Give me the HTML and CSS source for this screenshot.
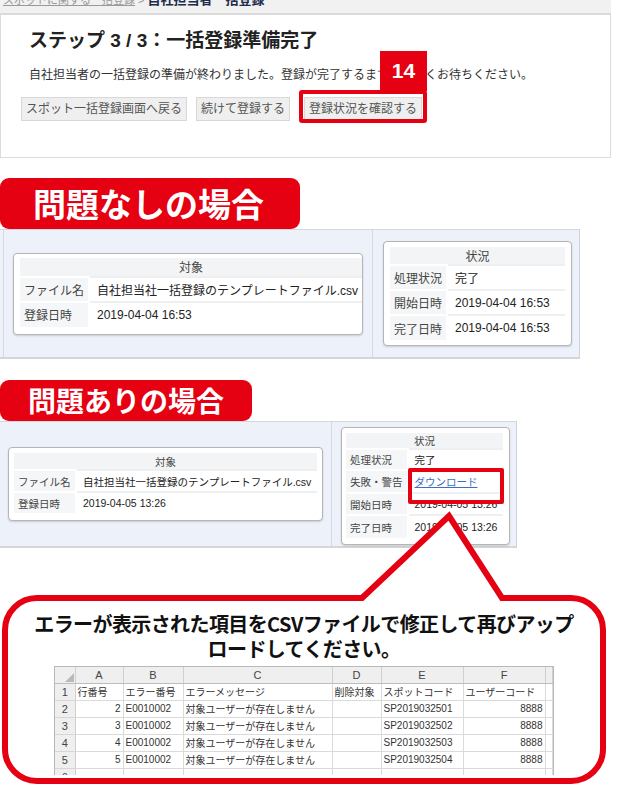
FILE: index.html
```html
<!DOCTYPE html>
<html lang="ja">
<head>
    <meta charset="utf-8">
    <title>自社担当者一括登録</title>
    <link rel="stylesheet" href="styles.css">
</head>
<body>
    <div class="crumbs">
        <div class="crumbs-line"><a href="#">スポットに関する一括登録</a> &gt; <b>自社担当者一括登録</b></div>
    </div>

    <div class="panel">
        <h1>ステップ 3 / 3：一括登録準備完了</h1>
        <p class="lead">自社担当者の一括登録の準備が終わりました。登録が完了するまでしばらくお待ちください。</p>
        <div class="buttons">
            <button type="button">スポット一括登録画面へ戻る</button>
            <button type="button" class="btn-next">続けて登録する</button>
            <span class="marked">
                <button type="button">登録状況を確認する</button>
                <span class="step-num">14</span>
            </span>
        </div>
    </div>

    <!-- 問題なし -->
    <div class="case">
        <div class="tab">問題なしの場合</div>
        <div class="result">
            <div class="cell cell-left">
                <div class="card">
                    <table>
                        <tr><th colspan="2">対象</th></tr>
                        <tr><td class="k">ファイル名</td><td class="v">自社担当社一括登録のテンプレートファイル.csv</td></tr>
                        <tr><td class="k">登録日時</td><td class="v">2019-04-04 16:53</td></tr>
                    </table>
                </div>
            </div>
            <div class="cell cell-right">
                <div class="card">
                    <table>
                        <tr><th colspan="2">状況</th></tr>
                        <tr><td class="k">処理状況</td><td class="v">完了</td></tr>
                        <tr><td class="k">開始日時</td><td class="v">2019-04-04 16:53</td></tr>
                        <tr><td class="k">完了日時</td><td class="v">2019-04-04 16:53</td></tr>
                    </table>
                </div>
            </div>
        </div>
    </div>

    <!-- 問題あり -->
    <div class="case case-small">
        <div class="tab">問題ありの場合</div>
        <div class="result">
            <div class="cell cell-left">
                <div class="card">
                    <table>
                        <tr><th colspan="2">対象</th></tr>
                        <tr class="r1"><td class="k">ファイル名</td><td class="v">自社担当社一括登録のテンプレートファイル.csv</td></tr>
                        <tr class="r2"><td class="k">登録日時</td><td class="v">2019-04-05 13:26</td></tr>
                    </table>
                </div>
            </div>
            <div class="cell cell-right">
                <div class="card">
                    <table>
                        <tr><th colspan="2">状況</th></tr>
                        <tr class="r1"><td class="k">処理状況</td><td class="v">完了</td></tr>
                        <tr class="r2"><td class="k">失敗・警告</td><td class="v marked-cell"><a href="#">ダウンロード</a></td></tr>
                        <tr class="r3"><td class="k">開始日時</td><td class="v">2019-04-05 13:26</td></tr>
                        <tr class="r4"><td class="k">完了日時</td><td class="v">2019-04-05 13:26</td></tr>
                    </table>
                </div>
            </div>
        </div>
    </div>

    <div class="callout">
        <svg class="callout-shape" viewBox="0 502 618 290" width="618" height="290">
            <path d="M362 598 L449 516 L502 598 H571 A32 32 0 0 1 603 630 V749 A32 32 0 0 1 571 781 H37 A32 32 0 0 1 5 749 V630 A32 32 0 0 1 37 598 Z"
                  fill="#fff" stroke="#e50012" stroke-width="6" stroke-linejoin="miter" stroke-miterlimit="10"/>
        </svg>
        <p class="callout-text">エラーが表示された項目をCSVファイルで修正して再びアップ<br>ロードしてください。</p>
        <div class="sheet">
            <table>
                <colgroup>
                    <col class="c-n"><col class="c-a"><col class="c-b"><col class="c-c">
                    <col class="c-d"><col class="c-e"><col class="c-f"><col>
                </colgroup>
                <tr class="hdr">
                    <th class="corner"><svg width="9" height="9" viewBox="0 0 9 9"><polygon points="9,0 9,9 0,9" fill="#b9b9b9"/></svg></th>
                    <th>A</th><th>B</th><th>C</th><th>D</th><th>E</th><th>F</th><th></th>
                </tr>
                <tr><th>1</th><td>行番号</td><td>エラー番号</td><td>エラーメッセージ</td><td>削除対象</td><td>スポットコード</td><td>ユーザーコード</td><td></td></tr>
                <tr><th>2</th><td class="num">2</td><td>E0010002</td><td>対象ユーザーが存在しません</td><td></td><td>SP2019032501</td><td class="num">8888</td><td></td></tr>
                <tr><th>3</th><td class="num">3</td><td>E0010002</td><td>対象ユーザーが存在しません</td><td></td><td>SP2019032502</td><td class="num">8888</td><td></td></tr>
                <tr><th>4</th><td class="num">4</td><td>E0010002</td><td>対象ユーザーが存在しません</td><td></td><td>SP2019032503</td><td class="num">8888</td><td></td></tr>
                <tr><th>5</th><td class="num">5</td><td>E0010002</td><td>対象ユーザーが存在しません</td><td></td><td>SP2019032504</td><td class="num">8888</td><td></td></tr>
                <tr><th>6</th><td></td><td></td><td></td><td></td><td></td><td></td><td></td></tr>
            </table>
        </div>
    </div>
</body>
</html>
```

FILE: styles.css
```css
* {
    box-sizing: border-box;
}

body {
    margin: 0;
    width: 618px;
    height: 794px;
    overflow: hidden;
    background-color: #fff;
    font-family: "Liberation Sans", "Noto Sans CJK JP", sans-serif;
    color: #333;
}

/* breadcrumb bar, cut off at the top */
.crumbs {
    width: 611px;
    height: 15px;
    background-color: #f1f1f1;
    border-bottom: 2px solid #dadada;
    overflow: hidden;
}

.crumbs-line {
    margin-top: -8px;
    padding-left: 3px;
    font-size: 11px;
    line-height: 16px;
    white-space: nowrap;
    color: #999;
}

.crumbs a {
    color: #999;
}

.crumbs b {
    color: #1d2c4c;
    font-size: 13px;
}

/* step panel */
.panel {
    width: 611px;
    height: 143px;
    border: 1px solid #dcdcdc;
    border-top: 0;
    padding: 14px 20px 0 28px;
}

h1 {
    margin: 0;
    height: 26px;
    font-size: 19px;
    line-height: 24px;
    font-weight: bold;
    color: #222;
}

.lead {
    margin: 11px 0 0;
    height: 18px;
    font-size: 12px;
    line-height: 18px;
    color: #333;
    white-space: nowrap;
}

.buttons {
    display: flex;
    align-items: center;
    margin: 13px 0 0 -8px;
}

.buttons button {
    height: 24px;
    margin: 0 9px 0 0;
    padding: 3px 4px;
    font-family: "Liberation Sans", "Noto Sans CJK JP", sans-serif;
    font-size: 12px;
    line-height: 16px;
    color: #555;
    background-color: #efefef;
    border: 1px solid #d8d8d8;
    border-radius: 0;
    white-space: nowrap;
}

.buttons .btn-next {
    margin-right: 14px;
}

.marked {
    position: relative;
    display: inline-block;
}

.marked button {
    margin: 0;
}

.marked::after {
    content: "";
    position: absolute;
    top: -7px;
    right: -5px;
    bottom: -2px;
    left: -5px;
    border: 4px solid #e50012;
    border-radius: 3px;
}

.step-num {
    position: absolute;
    top: -46px;
    right: -5px;
    width: 47px;
    height: 40px;
    background-color: #e50012;
    color: #fff;
    font-size: 21px;
    font-weight: bold;
    line-height: 40px;
    text-align: center;
}

/* case sections */
.case {
    margin-top: 20px;
}

.tab {
    position: relative;
    z-index: 1;
    width: 300px;
    height: 51px;
    padding-left: 33px;
    background-color: #e50012;
    color: #fff;
    border-radius: 9px;
    font-family: "Noto Sans CJK JP", sans-serif;
    font-size: 33px;
    font-weight: bold;
    line-height: 51px;
    white-space: nowrap;
}

.result {
    display: grid;
    grid-template-columns: 370px 1fr;
    width: 580px;
    height: 130px;
    padding-left: 3px;
    background-color: #edf1fa;
    border-top: 1px solid #d4d8de;
    border-right: 1px solid #cfd3d9;
    border-bottom: 2px solid #d6d6d6;
}

.cell {
    display: flex;
    align-items: center;
}

.cell-left {
    padding: 0 9px;
    border-left: 1px solid #d6dae0;
    border-right: 1px solid #d6dae0;
}

.cell-right {
    padding: 0 7px 0 10px;
}

.card {
    width: 100%;
    background-color: #fff;
    border: 1px solid #b5b5b5;
    border-radius: 4px;
    box-shadow: 0 1px 2px rgba(0, 0, 0, 0.15);
    padding: 4px 6px 7px;
}

.cell-right .card {
    padding: 5px 6px 5px 6px;
}

.card table {
    width: 100%;
    border-collapse: collapse;
    font-size: 12px;
}

.card th {
    height: 19px;
    padding: 0;
    background-color: #f3f4f5;
    font-weight: normal;
    color: #444;
    text-align: center;
}

.cell-right .card th {
    height: 18px;
}

.card td {
    height: 25px;
    padding: 0 4px;
    border-top: 2px solid #eeeff0;
    white-space: nowrap;
}

.card td.k {
    width: 68px;
    background-color: #f5f6f7;
    border-top-color: #fff;
    border-right: 2px solid #fff;
    color: #444;
}

.cell-right .card td.k {
    width: 57px;
}

.card td.v {
    padding-left: 7px;
    color: #222;
}

/* smaller second case */
.case-small {
    margin-top: 21px;
}

.case-small .tab {
    width: 252px;
    height: 41px;
    padding-left: 28px;
    font-size: 28px;
    line-height: 41px;
}

.case-small .result {
    grid-template-columns: 332px 1fr;
    width: 517px;
    height: 127px;
    padding-left: 0;
}

.case-small .cell-left {
    padding: 0 8px;
    border-left: 0;
}

.case-small .cell-right {
    align-items: flex-start;
    padding: 5px 6px 0 9px;
}

.case-small .card {
    padding: 5px 5px 7px;
}

.case-small .cell-right .card {
    padding: 5px 6px 6px 4px;
}

.case-small .card table {
    font-size: 10.5px;
}

.case-small .card th {
    height: 17px;
}

.case-small .cell-right .card th {
    height: 16px;
}

.case-small .card td {
    height: 22px;
    padding: 0 4px;
}

.case-small .card .r2 td {
    height: 21px;
}

.case-small .cell-right .card .r1 td {
    height: 21px;
}

.case-small .cell-right .card .r2 td,
.case-small .cell-right .card .r4 td {
    height: 23px;
}

.case-small .card td.k {
    width: 62px;
}

.case-small .cell-right .card td.k {
    width: 61px;
}

.case-small .card td.v {
    padding-left: 6px;
}

.marked-cell {
    position: relative;
}

.marked-cell a {
    color: #3a6fc4;
}

.marked-cell::after {
    content: "";
    position: absolute;
    top: -3px;
    left: -1px;
    width: 88px;
    height: 28px;
    border: 4px solid #e50012;
    border-radius: 2px;
}

/* speech bubble */
.callout {
    position: relative;
    margin-top: 44px;
    height: 194px;
    padding-top: 19px;
}

.callout-shape {
    position: absolute;
    top: -90px;
    left: 0;
}

.callout-text {
    position: relative;
    margin: 0;
    padding-right: 10px;
    font-family: "Noto Sans CJK JP", sans-serif;
    font-size: 20px;
    font-weight: bold;
    line-height: 25px;
    letter-spacing: -0.6px;
    text-align: center;
    color: #111;
    white-space: nowrap;
}

/* spreadsheet snapshot */
.sheet {
    position: relative;
    width: 500px;
    height: 109px;
    margin: 5px 0 0 54px;
    overflow: hidden;
    background-color: #fff;
    border: 1px solid #b9b9b9;
    border-bottom: 0;
}

.sheet table {
    width: 100%;
    table-layout: fixed;
    border-collapse: collapse;
    font-family: "Liberation Sans", "Noto Sans CJK JP", sans-serif;
    font-size: 10px;
    color: #333;
}

.sheet .c-n { width: 20px; }
.sheet .c-a { width: 48px; }
.sheet .c-b { width: 60px; }
.sheet .c-c { width: 149px; }
.sheet .c-d { width: 49px; }
.sheet .c-e { width: 82px; }
.sheet .c-f { width: 82px; }

.sheet tr {
    height: 17px;
}

.sheet tr.hdr {
    height: 16px;
}

.sheet th {
    padding: 0;
    background-color: #efefef;
    border-right: 1px solid #cfcfcf;
    border-bottom: 1px solid #d6d6d6;
    font-size: 11px;
    font-weight: normal;
    color: #444;
    text-align: center;
}

.sheet tr.hdr th {
    border-bottom-color: #bdbdbd;
}

.sheet th.corner {
    text-align: right;
    vertical-align: bottom;
    line-height: 0;
    padding: 0 1px 1px 0;
}

.sheet td {
    padding: 0 2px;
    border-right: 1px solid #dadada;
    border-bottom: 1px solid #dadada;
    white-space: nowrap;
    overflow: hidden;
}

.sheet td.num {
    text-align: right;
}
```
